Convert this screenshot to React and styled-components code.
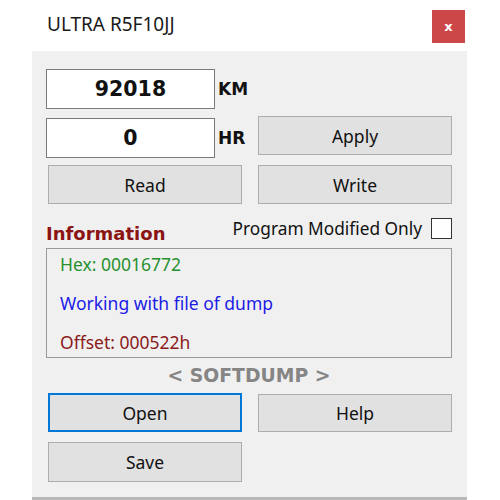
import React from 'react'
import styled, {createGlobalStyle} from 'styled-components'

const GlobalStyle = createGlobalStyle`
    body {
        margin: 0;
        background: #ffffff;
        font-family: "Noto Sans", "Open Sans", sans-serif;
    }
`

const Window = styled.div`
    width: 435px;
    margin-left: 32px;
    display: flex;
    flex-direction: column;
`

const TitleBar = styled.div`
    height: 51px;
    display: flex;
    align-items: flex-start;
    justify-content: space-between;
    background: #ffffff;
`

const Title = styled.span`
    margin: 11px 0 0 15px;
    font-size: 19px;
    color: #1a1a1a;
`

const CloseButton = styled.div`
    width: 33px;
    height: 33px;
    margin: 10px 2px 0 0;
    background: #cc4747;
    color: #ffffff;
    font-family: "DejaVu Sans", sans-serif;
    font-weight: bold;
    font-size: 13px;
    display: flex;
    align-items: center;
    justify-content: center;
`

const Panel = styled.div`
    height: 428px;
    background: #f0f0f0;
    padding: 18px 15px 0 14px;
    border-bottom: 3px solid #b8b8b8;
    display: flex;
    flex-direction: column;
`

const Row = styled.div`
    display: grid;
    grid-template-columns: 196px 194px;
    column-gap: 16px;
    align-items: start;
    margin-top: ${p => p.top || 0}px;
    height: ${p => p.h}px;
`

const Field = styled.div`
    display: flex;
    align-items: center;
    gap: 3px;
`

const ValueBox = styled.div`
    flex-shrink: 0;
    width: 167px;
    height: 38px;
    border: 1px solid #7a7a7a;
    background: #ffffff;
    display: flex;
    align-items: center;
    justify-content: center;
    font-family: "DejaVu Sans", sans-serif;
    font-weight: bold;
    font-size: 20.5px;
    color: #111111;
`

const Unit = styled.span`
    flex-shrink: 0;
    font-family: "DejaVu Sans", sans-serif;
    font-weight: bold;
    font-size: 17px;
    color: #111111;
    margin-top: ${p => p.shift || 0}px;
`

const Button = styled.div`
    box-sizing: border-box;
    width: 194px;
    height: ${p => p.h || 39}px;
    margin-left: ${p => p.left ? 2 : 0}px;
    margin-top: ${p => p.shift || 0}px;
    background: #e1e1e1;
    border: ${p => p.focused ? '2px solid #0078d7' : '1px solid #adadad'};
    display: flex;
    align-items: center;
    justify-content: center;
    font-size: 17.5px;
    color: #111111;
`

const InfoHeader = styled.div`
    height: 44px;
    display: flex;
    justify-content: space-between;
    align-items: flex-start;
`

const InfoTitle = styled.span`
    margin-top: 19px;
    font-family: "DejaVu Sans", sans-serif;
    font-weight: bold;
    font-size: 18px;
    color: #8b1414;
`

const CheckLabel = styled.label`
    display: flex;
    align-items: center;
    gap: 9px;
    margin-top: 13px;
    font-size: 17.3px;
    color: #111111;
`

const CheckBox = styled.span`
    width: 19px;
    height: 19px;
    border: 1px solid #333333;
    background: #ffffff;
`

const InfoBox = styled.div`
    box-sizing: border-box;
    height: 110px;
    border: 1px solid #9a9a9a;
    padding: 3px 13px 0;
    display: flex;
    flex-direction: column;
    gap: 14px;
`

const InfoLine = styled.div`
    font-size: 17.5px;
    line-height: 25px;
    color: ${p => p.color};
`

const Brand = styled.div`
    height: 35px;
    display: flex;
    align-items: center;
    justify-content: center;
    font-family: "DejaVu Sans", sans-serif;
    font-weight: bold;
    font-size: 18.8px;
    color: #858585;
`

const App = () => {
    return (
        <Window>
            <GlobalStyle />
            <TitleBar>
                <Title>ULTRA R5F10JJ</Title>
                <CloseButton>x</CloseButton>
            </TitleBar>
            <Panel>
                <Row h={40}>
                    <Field>
                        <ValueBox>92018</ValueBox>
                        <Unit shift={-1}>KM</Unit>
                    </Field>
                </Row>
                <Row h={40} top={9}>
                    <Field>
                        <ValueBox>0</ValueBox>
                        <Unit>HR</Unit>
                    </Field>
                    <Button shift={-2}>Apply</Button>
                </Row>
                <Row h={39} top={7}>
                    <Button left>Read</Button>
                    <Button>Write</Button>
                </Row>
                <InfoHeader>
                    <InfoTitle>Information</InfoTitle>
                    <CheckLabel>
                        Program Modified Only
                        <CheckBox />
                    </CheckLabel>
                </InfoHeader>
                <InfoBox>
                    <InfoLine color="#27902f">Hex: 00016772</InfoLine>
                    <InfoLine color="#1c1ce6">Working with file of dump</InfoLine>
                    <InfoLine color="#8b1a1a">Offset: 000522h</InfoLine>
                </InfoBox>
                <Brand>&lt; SOFTDUMP &gt;</Brand>
                <Row h={39}>
                    <Button left focused>Open</Button>
                    <Button shift={1} h={38}>Help</Button>
                </Row>
                <Row h={40} top={10}>
                    <Button left h={40}>Save</Button>
                </Row>
            </Panel>
        </Window>
    )
}

export default App
